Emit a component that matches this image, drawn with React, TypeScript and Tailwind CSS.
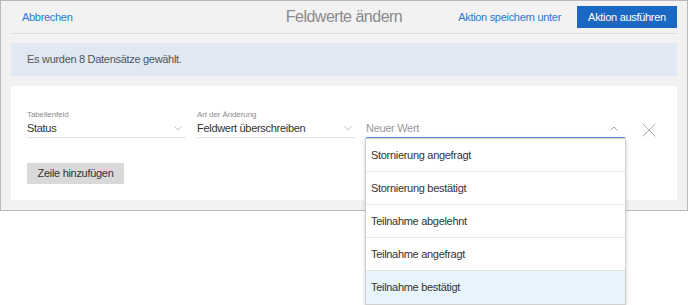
import React from "react";

const ChevronDown = () => (
  <svg width="8" height="5" viewBox="0 0 8 5" className="block">
    <path d="M0.5 0.5 L4 4 L7.5 0.5" fill="none" stroke="#b8b8b8" strokeWidth="0.9" />
  </svg>
);

const ChevronUp = () => (
  <svg width="8" height="5" viewBox="0 0 8 5" className="block">
    <path d="M0.5 4.5 L4 1 L7.5 4.5" fill="none" stroke="#9a9a9a" strokeWidth="0.9" />
  </svg>
);

const CloseX = () => (
  <svg width="14" height="14" viewBox="0 0 14 14" className="block">
    <path d="M0.5 0.5 L13.5 13.5 M13.5 0.5 L0.5 13.5" fill="none" stroke="#b0b0b0" strokeWidth="1" />
  </svg>
);

const options = [
  "Stornierung angefragt",
  "Stornierung bestätigt",
  "Teilnahme abgelehnt",
  "Teilnahme angefragt",
  "Teilnahme bestätigt",
];

export default function App() {
  return (
    <div
      className="w-[689px] h-[305px] bg-white overflow-hidden text-[11px] tracking-[-0.3px] text-[#333]"
      style={{ fontFamily: '"Liberation Sans", Arial, sans-serif' }}
    >
      <div className="w-[688px] h-[211px] border border-[#b9b9b9] bg-[#f2f2f2] px-[10px]">
        {/* Header */}
        <div className="h-[33px] grid grid-cols-[1fr_auto_1fr] items-center border-b border-[#dadada]">
          <div className="pl-[11px]">
            <span className="text-[#2b78d0]">Abbrechen</span>
          </div>
          <div className="text-[16px] tracking-[-0.5px] text-[#8a8a8a]">Feldwerte ändern</div>
          <div className="flex justify-end items-center gap-[16px]">
            <span className="text-[#2b78d0]">Aktion speichern unter</span>
            <div className="h-[22px] w-[100px] bg-[#1a68c4] text-white flex items-center justify-center">
              Aktion ausführen
            </div>
          </div>
        </div>

        {/* Info */}
        <div className="mt-[9px] h-[33px] bg-[#dfe8f3] flex items-center pl-[16px] text-[#555]">
          Es wurden 8 Datensätze gewählt.
        </div>

        {/* Card */}
        <div className="mt-[10px] h-[114px] bg-white pl-[16px] pt-[23px]">
          <div className="flex items-start">
            <div className="w-[159px]">
              <div className="h-[11px] text-[8px] tracking-[-0.1px] leading-[11px] text-[#8c8c8c]">Tabellenfeld</div>
              <div className="mt-[0px] h-[18px] border-b border-[#e3e3e3] flex items-center justify-between pr-[4px]">
                <span>Status</span>
                <ChevronDown />
              </div>
            </div>
            <div className="w-[159px] ml-[11px]">
              <div className="h-[11px] text-[8px] tracking-[-0.1px] leading-[11px] text-[#8c8c8c]">Art der Änderung</div>
              <div className="h-[18px] border-b border-[#e3e3e3] flex items-center justify-between pr-[4px]">
                <span>Feldwert überschreiben</span>
                <ChevronDown />
              </div>
            </div>
            <div className="w-[259px] ml-[10px] relative">
              <div className="h-[11px]" />
              <div className="h-[18px] border-b border-[#5b9bd8] flex items-center justify-between pr-[7px]">
                <span className="text-[#9a9a9a]">Neuer Wert</span>
                <ChevronUp />
              </div>
              <div className="absolute left-[-1px] top-[29px] w-[261px] bg-white border border-[#cfcfcf] shadow-[0_1px_4px_rgba(0,0,0,0.18)] z-10">
                {options.map((o, i) => (
                  <div
                    key={o}
                    className={
                      "h-[33px] flex items-center pl-[5px] " +
                      (i < options.length - 1 ? "border-b border-[#e6e6e6] " : "") +
                      (i === options.length - 1 ? "bg-[#e8f4fc]" : "")
                    }
                  >
                    {o}
                  </div>
                ))}
              </div>
            </div>
            <div className="ml-[17px] mt-[14px]">
              <CloseX />
            </div>
          </div>
          <div className="mt-[25px] w-[97px] h-[21px] bg-[#d9d9d9] flex items-center justify-center">
            Zeile hinzufügen
          </div>
        </div>
      </div>
    </div>
  );
}
